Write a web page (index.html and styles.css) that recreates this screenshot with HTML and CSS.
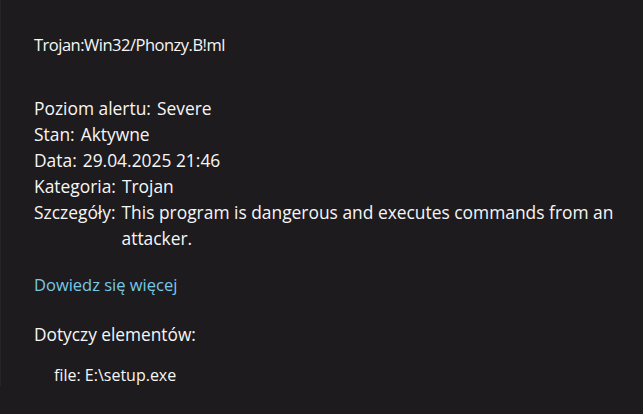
FILE: index.html
```html
<!DOCTYPE html>
<html lang="pl">
<head>
  <meta charset="UTF-8">
  <title>Szczegóły zagrożenia</title>
  <link rel="stylesheet" href="styles.css">
</head>
<body>
  <div class="threat-panel">
    <h1 class="threat-name">Trojan:Win32/Phonzy.B!ml</h1>

    <div class="threat-details">
      <div class="detail-row"><span class="detail-label">Poziom alertu:</span><span class="detail-value">Severe</span></div>
      <div class="detail-row"><span class="detail-label">Stan:</span><span class="detail-value">Aktywne</span></div>
      <div class="detail-row"><span class="detail-label">Data:</span><span class="detail-value">29.04.2025 21:46</span></div>
      <div class="detail-row"><span class="detail-label">Kategoria:</span><span class="detail-value">Trojan</span></div>
      <div class="detail-row"><span class="detail-label">Szczegóły:</span><span class="detail-value">This program is dangerous and executes commands from an attacker.</span></div>
    </div>

    <a class="learn-more" href="#">Dowiedz się więcej</a>

    <h2 class="affected-title">Dotyczy elementów:</h2>
    <ul class="affected-list">
      <li>file: E:\setup.exe</li>
    </ul>
  </div>
</body>
</html>
```

FILE: styles.css
```css
body {
  margin: 0;
  background-color: #1e1b1e;
  color: #f6f6f6;
  font-family: "Open Sans", "Noto Sans", sans-serif;
  height: 414px;
  overflow: hidden;
}
.threat-panel {
  padding: 34px 0 0 33px;
  border-left: 1px solid #262426;
}
.threat-name {
  font-size: 16.5px;
  font-weight: normal;
  letter-spacing: -0.5px;
  margin: 0 0 39px 0;
  line-height: 22px;
}
.threat-details {
  width: 598px;
  font-size: 17.4px;
  line-height: 26px;
}
.detail-row {
  display: flex;
  gap: 6px;
}
.detail-label {
  white-space: nowrap;
}
.learn-more {
  display: inline-block;
  margin-top: 23px;
  color: #77c9e6;
  text-decoration: none;
  font-size: 16.5px;
  line-height: 22px;
}
.affected-title {
  font-size: 17.3px;
  font-weight: normal;
  margin: 28px 0 0 0;
  line-height: 22px;
}
.affected-list {
  list-style: none;
  margin: 18px 0 0 0;
  padding: 0 0 0 20px;
  font-size: 16px;
  line-height: 22px;
}
```
